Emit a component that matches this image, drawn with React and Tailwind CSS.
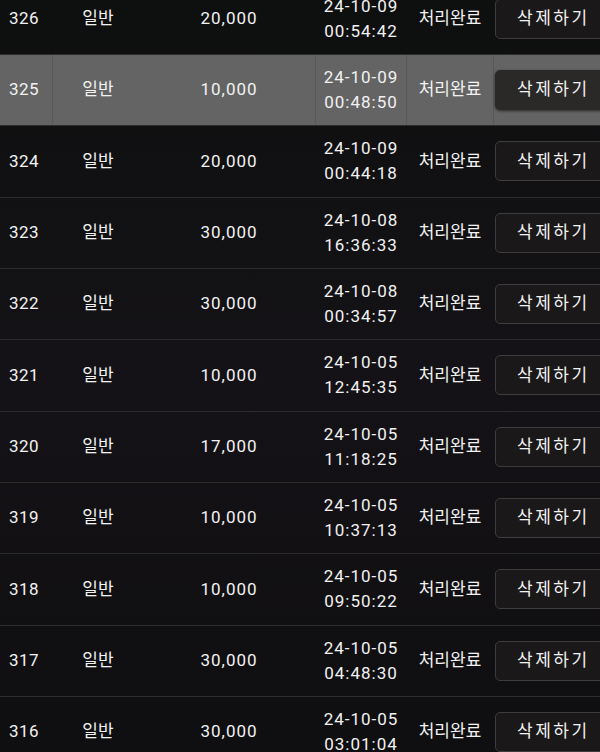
const rows = [
  { id: 326, amount: '20,000', date: '24-10-09', time: '00:54:42' },
  { id: 325, amount: '10,000', date: '24-10-09', time: '00:48:50', active: true },
  { id: 324, amount: '20,000', date: '24-10-09', time: '00:44:18' },
  { id: 323, amount: '30,000', date: '24-10-08', time: '16:36:33' },
  { id: 322, amount: '30,000', date: '24-10-08', time: '00:34:57' },
  { id: 321, amount: '10,000', date: '24-10-05', time: '12:45:35' },
  { id: 320, amount: '17,000', date: '24-10-05', time: '11:18:25' },
  { id: 319, amount: '10,000', date: '24-10-05', time: '10:37:13' },
  { id: 318, amount: '10,000', date: '24-10-05', time: '09:50:22' },
  { id: 317, amount: '30,000', date: '24-10-05', time: '04:48:30' },
  { id: 316, amount: '30,000', date: '24-10-05', time: '03:01:04' },
]

export default function App() {
  return (
    <div
      className="w-[600px] h-[752px] overflow-hidden bg-gradient-to-b from-[#0e0f0f] via-[#141216] to-[#0f0e10] text-[#f2f2f2] text-[17px]"
      style={{ fontFamily: 'Roboto, "Noto Sans CJK KR", sans-serif' }}
    >
      <div className="mt-[-17.33px]">
        {rows.map((r) => (
          <Row key={r.id} row={r} />
        ))}
      </div>
    </div>
  )
}

function Row({ row }) {
  const cell = row.active ? 'border-r border-[#585858]' : 'border-r border-transparent'
  return (
    <div
      className={`flex h-[71.33px] border-t border-[#2c2c2c] ${row.active ? 'bg-[#646464]' : ''}`}
    >
      <div className={`w-[53px] shrink-0 flex items-center pl-[9px] tracking-[0.4px] ${cell}`}>{row.id}</div>
      <div className="w-[90px] shrink-0 flex items-center justify-center">일반</div>
      <div className={`w-[173px] shrink-0 flex items-center justify-center tracking-[1px] ${cell}`}>
        {row.amount}
      </div>
      <div
        className={`w-[91px] shrink-0 flex flex-col items-center justify-center leading-[25px] tracking-[1px] ${cell}`}
      >
        <span>{row.date}</span>
        <span>{row.time}</span>
      </div>
      <div className={`w-[87px] shrink-0 flex items-center justify-center ${cell}`}>처리완료</div>
      <div className="flex-1 flex items-center pl-[1px]">
        <button
          className={`h-[40px] w-[112px] shrink-0 rounded-[5px] border pl-[21px] text-left tracking-[2.5px] ${
            row.active
              ? 'bg-[#2a2927] border-[#2a2927] shadow-[0_1px_3px_rgba(0,0,0,0.6)]'
              : 'bg-[#1a1818] border-[#3e3d3d]'
          }`}
        >
          삭제하기
        </button>
      </div>
    </div>
  )
}
